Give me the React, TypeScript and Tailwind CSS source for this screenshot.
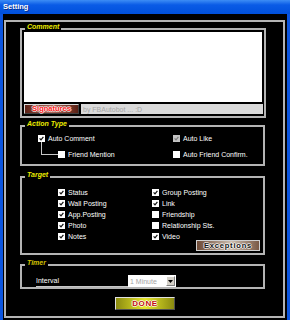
import type { ReactNode } from "react";

function Box({ checked = false, disabled = false }: { checked?: boolean; disabled?: boolean }) {
  return (
    <span
      className={`inline-flex items-center justify-center w-[7px] h-[7px] shrink-0 ${
        disabled ? "bg-[#c4c4c4]" : "bg-white"
      }`}
    >
      {checked && (
        <svg width="5" height="5" viewBox="0 0 5 5">
          <path
            d="M0.6 2.4 L2 3.9 L4.4 0.9"
            fill="none"
            stroke={disabled ? "#7c7c7c" : "#111"}
            strokeWidth="1.2"
          />
        </svg>
      )}
    </span>
  );
}

function Check({ label, checked, disabled }: { label: string; checked?: boolean; disabled?: boolean }) {
  return (
    <div className="flex items-center gap-[3px] h-[7px] whitespace-nowrap">
      <Box checked={checked} disabled={disabled} />
      <span className="leading-none">{label}</span>
    </div>
  );
}

function Group({ title, className, dim, children }: { title: string; className: string; dim?: boolean; children: ReactNode }) {
  return (
    <div className={`relative border-2 border-[#b4b4b4] ${className}`}>
      <span
        className={`absolute left-[3px] -top-[8px] bg-black px-[2px] leading-[9px] italic font-bold ${
          dim ? "text-[#d4c400]" : "text-[#ecec00]"
        }`}
      >
        {title}
      </span>
      {children}
    </div>
  );
}

// light halo round the lettering on the image buttons
const outline =
  "[text-shadow:1px_0_0_rgba(255,255,255,0.75),-1px_0_0_rgba(255,255,255,0.75),0_1px_0_rgba(255,255,255,0.75),0_-1px_0_rgba(255,255,255,0.75)]";

export default function App() {
  return (
    <div className="w-[290px] h-[320px] overflow-hidden bg-black text-white text-[7px] font-['Liberation_Sans',Arial,sans-serif]">
      {/* title bar */}
      <div className="h-[14px] px-[3px] flex items-center bg-[linear-gradient(to_bottom,#3d8df5,#0a5be6_35%,#0050dc)] text-[7.5px] font-bold text-white [text-shadow:1px_1px_0_#0a2d8a]">
        Setting
      </div>

      <div className="h-[306px] border-x-[3px] border-[#0b55e0] pt-[6px] pl-[1px]">
        <div className="w-[281px] h-[298px] border-2 border-[#b4b4b4] pl-[14px] pt-[6px] flex flex-col">
          {/* Comment */}
          <Group title="Comment" className="w-[246px] h-[90px] pt-[2px] pl-[2px]">
            <textarea className="block w-[238px] h-[70px] bg-white resize-none outline-none" />
            <div className="mt-[2px] flex gap-[2px] h-[10px]">
              <button
                className={`w-[55px] h-[10px] border border-t-[#d8d8d8] border-l-[#d8d8d8] border-b-[#404040] border-r-[#404040] bg-[linear-gradient(to_right,#5a2014,#b0685a_50%,#5a2014)] text-[#ff1c1c] font-bold text-[7.5px] leading-none ${outline}`}
              >
                Signatures
              </button>
              <div className="w-[182px] h-[10px] bg-[#dadada] text-[#a6a6a6] pl-[2px] flex items-center leading-none">
                by FBAutobot ... :D
              </div>
            </div>
          </Group>

          {/* Action Type */}
          <Group title="Action Type" className="mt-[7px] w-[245px] h-[41px] pl-[16px] pt-[8px] flex">
            <div className="w-[135px] flex flex-col">
              <Check label="Auto Comment" checked />
              <div className="flex">
                <div className="ml-[3px] w-[17px] h-[13px] border-l border-b border-[#c8c8c8]" />
                <div className="mt-[9px]">
                  <Check label="Friend Mention" />
                </div>
              </div>
            </div>
            <div className="flex flex-col">
              <Check label="Auto Like" checked disabled />
              <div className="mt-[9px]">
                <Check label="Auto Friend Confirm." />
              </div>
            </div>
          </Group>

          {/* Target */}
          <Group title="Target" className="mt-[10px] w-[245px] h-[79px] pt-[9px] pl-[36px] pr-[3px]">
            <div className="grid grid-cols-[94px_1fr] auto-rows-[11px] items-center">
              <Check label="Status" checked />
              <Check label="Group Posting" checked />
              <Check label="Wall Posting" checked />
              <Check label="Link" checked />
              <Check label="App.Posting" checked />
              <Check label="Friendship" />
              <Check label="Photo" checked />
              <Check label="Relationship Sts." />
              <Check label="Notes" checked />
              <Check label="Video" checked />
            </div>
            <div className="-mt-[2px] flex justify-end">
              <button
                className={`w-[64px] h-[11px] border border-[#d0d0d0] bg-[linear-gradient(to_right,#6e4a36,#cbbcae_55%,#7a5a46)] text-[#141414] font-bold text-[7.5px] leading-none tracking-[0.8px] ${outline}`}
              >
                Exceptions
              </button>
            </div>
          </Group>

          {/* Timer */}
          <Group title="Timer" dim className="mt-[9px] w-[245px] h-[25px] pl-[14px] pt-[4px] flex items-end">
            <div className="w-[92px] h-[12px] border-b border-[#c8c8c8] flex items-center leading-none">
              Interval
            </div>
            <div className="w-[48px] h-[12px] bg-white flex items-center justify-between">
              <span className="pl-[2px] text-[#a4a4a4] leading-none">1 Minute</span>
              <span className="mr-[1px] w-[9px] h-[10px] bg-[#d4d0c8] border border-t-white border-l-white border-b-[#808080] border-r-[#808080] flex items-center justify-center">
                <svg width="5" height="3" viewBox="0 0 5 3">
                  <path d="M0 0 H5 L2.5 3 Z" fill="#000" />
                </svg>
              </span>
            </div>
          </Group>

          {/* Done */}
          <button
            className={`mt-[8px] ml-[95px] w-[60px] h-[13px] border border-t-[#e0e0e0] border-l-[#e0e0e0] border-b-[#505050] border-r-[#505050] bg-[linear-gradient(to_right,#8a8a10,#e6e62a_50%,#8a8a10)] text-[#c41010] font-bold text-[8px] leading-none tracking-[0.6px] ${outline}`}
          >
            DONE
          </button>
        </div>
      </div>
    </div>
  );
}
